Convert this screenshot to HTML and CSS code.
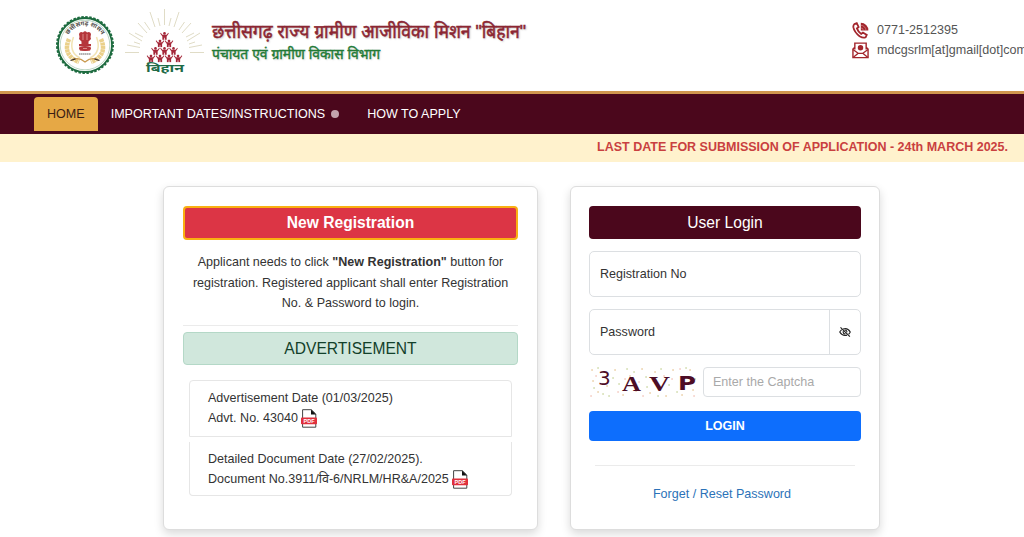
FILE: index.html
```
<!DOCTYPE html>
<html lang="hi">
<head>
	<meta charset="utf-8">
	<title>छत्तीसगढ़ राज्य ग्रामीण आजीविका मिशन "बिहान"</title>
	<link rel="stylesheet" href="styles.css">
</head>
<body>
	<svg width="0" height="0" class="defs">
		<symbol id="man" viewBox="0 0 10 9">
			<circle cx="5" cy="1.6" r="1.5"/>
			<path d="M.8.8 2.6 3H7.4L9.2.8 9.8 1.8 7.400 5V8.800H5.400V6.500H4.600V8.800H2.600V5L.2 1.800z"/>
		</symbol>
	</svg>

	<div class="header">
		<svg class="emblem" viewBox="0 0 60 60">
			<circle cx="30" cy="30" r="27" fill="#fff" stroke="#1d6b3f" stroke-width="1.800"/>
			<circle cx="30" cy="30" r="28" fill="none" stroke="#1d6b3f" stroke-width="2" stroke-dasharray="2.500 1.500"/>
			<circle cx="30" cy="30" r="24.800" fill="none" stroke="#8fb99b" stroke-width=".6"/>
			<path id="arc" d="M11.500 25A19 19 0 0 1 48.500 25" fill="none"/>
			<text font-size="6.200" font-weight="bold" fill="#55504c"><textPath href="#arc" startOffset="50%" text-anchor="middle">छत्तीसगढ़ शासन</textPath></text>
			<path d="M14 24Q7 40 24 47M46 24Q53 40 36 47" fill="none" stroke="#ead08a" stroke-width="4.500" stroke-dasharray="3 .5"/>
			<path d="M18.500 22Q13 37 25 43M41.500 22Q47 37 35 43" fill="none" stroke="#f2e4b4" stroke-width="1.500"/>
			<path d="M24 19Q25 16 28 17.500Q30 15 32 17.500Q35 16 36 19L35.500 22 36 24 33.500 26.500V29H36V31H24V29H26.500V26.500L24 24 24.500 22z" fill="#b5363b"/>
			<path d="M24 31.500H36L35 36H25z" fill="#d98887"/>
			<ellipse cx="30" cy="33.500" rx="6" ry="2.600" fill="#b5363b"/>
			<path d="M28 19V25M32 19V25M28 33.500H32" stroke="#e4a19d" stroke-width=".8"/>
			<path d="M24 39H36" stroke="#666" stroke-width="1" stroke-dasharray="1.600 .4"/>
			<path d="M18 44.500Q24 42 30 47Q36 42 42 44.500" fill="none" stroke="#c99a50" stroke-width="1.300"/>
			<path d="M15.500 45.500 20.500 43.800M44.500 45.500 39.500 43.800" stroke="#3b3029" stroke-width="1.300"/>
		</svg>
		<svg class="bihan" viewBox="0 0 80 68">
			<g stroke="#e0dcc6" stroke-width="1">
				<path d="M39.500 3V19M33 12 35 20M46 12 44 20M25 6 30 21M54 6 49 21M19.500 16 25 24M59.500 16 54 24M13 17 22 27M66 17 57 27M10 27 18 31M69 27 61 31M4 27 17 35M75 27 62 35M9 36 15 38M70 36 64 38M2 39 15 41.500M77 39 64 41.500M0 46.500H14M79 46.500H65"/>
			</g>
			<g fill="#a5283a">
				<use href="#man" x="34.500" y="26" width="10" height="8"/>
				<use href="#man" x="30" y="33.500" width="10" height="8"/>
				<use href="#man" x="39" y="33.500" width="10" height="8"/>
				<use href="#man" x="25.500" y="41" width="10" height="8"/>
				<use href="#man" x="34.500" y="41" width="10" height="8"/>
				<use href="#man" x="43.500" y="41" width="10" height="8"/>
				<use href="#man" x="21" y="48.500" width="10" height="8"/>
				<use href="#man" x="30" y="48.500" width="10" height="8"/>
				<use href="#man" x="39" y="48.500" width="10" height="8"/>
				<use href="#man" x="48" y="48.500" width="10" height="8"/>
			</g>
			<text x="40" y="65.500" text-anchor="middle" textLength="38" lengthAdjust="spacingAndGlyphs" font-size="11" font-weight="bold" fill="#1f6b48">बिहान</text>
		</svg>
		<div class="title">
			<h1>छत्तीसगढ़ राज्य ग्रामीण आजीविका मिशन "बिहान"</h1>
			<h2>पंचायत एवं ग्रामीण विकास विभाग</h2>
		</div>
		<ul class="contact">
			<li>
				<svg viewBox="0 0 18 18">
					<path d="M2.500 2.200 5 1.200 7 5.400 5.200 6.800Q6.500 10.500 9.800 12.700L11.600 11.200 15.600 13.700 14.400 16.200Q12 17.500 8 15Q2.500 11 1.400 5.500Q1.200 3.400 2.500 2.200z" fill="#fff" stroke="#a3262d" stroke-width="1.900"/>
					<path d="M9.300 9V.8A8 8 0 0 1 17.300 9z" fill="#a3262d"/>
					<path d="M9.300 6.300A2.700 2.700 0 0 1 12 9M9.300 3.500A5.500 5.500 0 0 1 14.800 9" fill="none" stroke="#e5b5b5" stroke-width=".5"/>
				</svg>
				<span>0771-2512395</span>
			</li>
			<li>
				<svg viewBox="0 0 18 18">
					<path d="M3 8V1.200H15V8M3 5.500 1 7.500V16.500H17V7.500L15 5.500" fill="none" stroke="#a3262d" stroke-width="1.500"/>
					<path d="M1 8 6.500 12 1.200 16.300M17 8 11.500 12 16.800 16.300M6 12H12" fill="none" stroke="#a3262d" stroke-width="1.400"/>
					<circle cx="9" cy="6" r="2.900" fill="#a3262d"/>
				</svg>
				<span>mdcgsrlm[at]gmail[dot]com</span>
			</li>
		</ul>
	</div>

	<ul class="nav">
		<li><a href="#" class="on">HOME</a></li>
		<li><a href="#">IMPORTANT DATES/INSTRUCTIONS <i></i></a></li>
		<li><a href="#">HOW TO APPLY</a></li>
	</ul>
	<div class="notice">LAST DATE FOR SUBMISSION OF APPLICATION - 24th MARCH 2025.</div>

	<div class="main">
		<div class="card register">
			<a href="#" class="bar red">New Registration</a>
			<p>Applicant needs to click <b>"New Registration"</b> button for registration. Registered applicant shall enter Registration No. &amp; Password to login.</p>
			<hr>
			<div class="bar green">ADVERTISEMENT</div>
			<ul class="docs">
				<li>
					Advertisement Date (01/03/2025)<br>
					Advt. No. 43040
					<svg viewBox="0 0 16 19">
						<path d="M1.600 9V.7H10.300L14.800 5V9M1.600 13V18.200H14.800V13" fill="#fff" stroke="#444"/>
						<path d="M10 .5 15 5.400H10z" fill="#111"/>
						<rect y="8.500" width="16" height="6.800" rx=".8" fill="#e0303c"/>
						<text x="8" y="13.900" text-anchor="middle" font-size="5.500" font-weight="bold" fill="#fff">PDF</text>
					</svg>
				</li>
				<li>
					Detailed Document Date (27/02/2025).<br>
					Document No.3911/वि-6/NRLM/HR&amp;A/2025
					<svg viewBox="0 0 16 19">
						<path d="M1.600 9V.7H10.300L14.800 5V9M1.600 13V18.200H14.800V13" fill="#fff" stroke="#444"/>
						<path d="M10 .5 15 5.400H10z" fill="#111"/>
						<rect y="8.500" width="16" height="6.800" rx=".8" fill="#e0303c"/>
						<text x="8" y="13.900" text-anchor="middle" font-size="5.500" font-weight="bold" fill="#fff">PDF</text>
					</svg>
				</li>
			</ul>
		</div>
		<div class="card login">
			<div class="bar dark">User Login</div>
			<div class="field">Registration No</div>
			<div class="field">
				Password
				<span class="eye">
					<svg viewBox="0 0 16 16" fill="none" stroke="#222" stroke-width="1.500">
						<path d="M5.500 4Q11.500 1.800 15 8Q14.200 9.800 12.800 11M10.800 12.200Q4.500 14 1 8Q2 6 3.700 4.800"/>
						<path d="M5.600 7Q5.200 10.600 8.800 10.600M7.600 5.300Q10.600 5.200 10.600 8.400M2 1.800 14.500 14.300"/>
					</svg>
				</span>
			</div>
			<div class="captcha">
				<svg viewBox="0 0 108 34">
					<g fill="none" stroke-width="1.500" stroke-linecap="round">
						<path d="M3 5h.1M9 27h.1M18 21h.1M26 5h.1M34 30h.1M41 11h.1M53 4h.1M61 28h.1M66 7h.1M77 31h.1M84 5h.1M93 30h.1M101 5h.1M104 25h.1M4 16h.1M47 26h.1" stroke="#e2b97e"/>
						<path d="M5 23h.1M14 29h.1M24 13h.1M30 19h.1M38 4h.1M45 7h.1M57 12h.1M58 22h.1M72 4h.1M80 20h.1M88 27h.1M97 3h.1M106 14h.1M69 31h.1M20 31h.1M9 3h.1" stroke="#bccb84"/>
						<path d="M7 11h.1M29 27h.1M36 14h.1M50 17h.1M64 16h.1M75 11h.1M83 14h.1M91 4h.1M105 31h.1M54 31h.1M2 31h.1" stroke="#efb3a6"/>
					</g>
					<text x="9" y="20" class="c1">3</text>
					<text x="33" y="26" textLength="19" lengthAdjust="spacingAndGlyphs" class="c2">A</text>
					<text x="60" y="25.500" textLength="21" lengthAdjust="spacingAndGlyphs" class="c2">V</text>
					<text x="89" y="24.500" textLength="18" lengthAdjust="spacingAndGlyphs" class="c3">P</text>
				</svg>
				<input type="text" placeholder="Enter the Captcha">
			</div>
			<a href="#" class="bar blue">LOGIN</a>
			<hr>
			<a href="#" class="forget">Forget / Reset Password</a>
		</div>
	</div>
</body>
</html>
```

FILE: styles.css
```
* {
	margin: 0;
	padding: 0;
	box-sizing: border-box;
}
body {
	height: 537px;
	overflow: hidden;
	font: 12.55px/20.5px "Liberation Sans", "Noto Sans Devanagari", "Noto Sans", sans-serif;
	color: #333;
	background: #fff;
}
ul {
	list-style: none;
}
a {
	text-decoration: none;
}
.defs {
	position: absolute;
}

/* header */
.header {
	display: flex;
	height: 91px;
	padding-left: 55px;
	white-space: nowrap;
}
.emblem {
	width: 60px;
	height: 60px;
	margin-top: 15px;
	flex: none;
}
.bihan {
	width: 80px;
	height: 68px;
	margin: 6px 0 0 10px;
	flex: none;
}
.title {
	width: 647px;
	padding: 18px 0 0 7px;
	flex: none;
}
.title h1,
.title h2 {
	transform-origin: 0 0;
	font-weight: normal;
}
.title h1 {
	font-size: 19px;
	line-height: 27px;
	transform: scaleX(.923);
	color: #8c2632;
	-webkit-text-stroke: .5px #8c2632;
	text-shadow: 1px 1px 2px #bbb;
}
.title h2 {
	font-size: 14px;
	line-height: 18px;
	transform: scaleX(.992);
	color: #217a35;
	-webkit-text-stroke: .4px #217a35;
	text-shadow: 1px 1px 2px #ccc;
}
.contact {
	padding-top: 20px;
	color: #555;
}
.contact li {
	display: flex;
	align-items: center;
	height: 20px;
}
.contact svg {
	width: 17px;
	height: 17px;
	margin-right: 8px;
	flex: none;
}

/* menu */
.nav {
	display: flex;
	height: 43px;
	padding: 3px 0 0 34px;
	border-top: 3px solid #d0974f;
	background: #4b071c;
}
.nav a {
	display: flex;
	align-items: center;
	height: 34px;
	padding: 0 13px;
	color: #fff;
}
.nav .on {
	color: #3a1d14;
	background: #e6a845;
	border-radius: 4px 4px 0 0;
}
.nav i {
	width: 8px;
	height: 8px;
	margin: 0 2px 0 6px;
	border-radius: 50%;
	background: #c3a3ad;
}
.notice {
	height: 28px;
	padding-right: 16px;
	font-size: 12.5px;
	line-height: 27px;
	text-align: right;
	font-weight: bold;
	color: #c9403f;
	background: #fff2cd;
}

/* cards */
.main {
	display: flex;
	gap: 32px;
	padding: 24px 0 0 163px;
}
.card {
	height: 344px;
	padding: 19px;
	border: 1px solid #ddd;
	border-radius: 6px;
	background: #fff;
	box-shadow: 0 4px 10px rgba(0, 0, 0, .15);
}
.register {
	width: 375px;
}
.login {
	width: 310px;
	padding: 19px 18px;
}
.bar {
	display: block;
	height: 33px;
	line-height: 33px;
	border-radius: 4px;
	text-align: center;
	font-size: 15.6px;
}
.red {
	height: 34px;
	line-height: 30px;
	font-weight: bold;
	color: #fff;
	background: #dc3545;
	border: 2px solid #f9b012;
}
.green {
	line-height: 32px;
	color: #12402a;
	background: #d0e7dc;
	border: 1px solid #b4d8c7;
}
.dark {
	color: #fff;
	background: #4b071c;
}
.blue {
	height: 30px;
	line-height: 30px;
	font-size: 12.5px;
	font-weight: bold;
	color: #fff;
	background: #0d6efd;
}
.register p {
	padding: 12px 4px 11px;
	text-align: center;
}
hr {
	border: 0;
	border-top: 1px solid #ebebeb;
}
.register hr {
	margin-bottom: 6px;
}
.docs {
	padding: 15px 6px 0;
}
.docs li {
	height: 57px;
	padding: 7px 18px;
	border: 1px solid #e6e6e6;
	border-radius: 4px 4px 0 0;
}
.docs li + li {
	height: 54px;
	margin-top: 5px;
	border-top: 0;
	border-radius: 0 0 4px 4px;
}
.docs svg {
	width: 16px;
	height: 19px;
	margin-bottom: -6px;
	vertical-align: baseline;
}

/* login form */
.field {
	display: flex;
	align-items: center;
	justify-content: space-between;
	height: 46px;
	margin-top: 12px;
	padding-left: 10px;
	border: 1px solid #dcdfe2;
	border-radius: 5px;
}
.eye {
	display: flex;
	align-items: center;
	justify-content: center;
	width: 31px;
	height: 100%;
	border-left: 1px solid #dcdfe2;
}
.eye svg {
	width: 12px;
	height: 12px;
}
.captcha {
	display: flex;
	gap: 6px;
	align-items: center;
	height: 34px;
	margin: 10px 0 12px;
}
.captcha svg {
	width: 108px;
	height: 34px;
}
.captcha text {
	fill: #4d0d26;
}
.c1 {
	font: 20px "DejaVu Sans", sans-serif;
}
.c2 {
	font: bold 21px "Liberation Serif", serif;
}
.c3 {
	font: bold 20px "DejaVu Sans", sans-serif;
}
.captcha input {
	width: 158px;
	height: 30px;
	padding-left: 9px;
	border: 1px solid #dcdfe2;
	border-radius: 4px;
	font: inherit;
}
.captcha input::placeholder {
	color: #a9a9a9;
}
.login hr {
	margin: 24px 6px 18px;
}
.forget {
	display: block;
	padding-right: 6px;
	text-align: center;
	color: #2b72b8;
}
```
